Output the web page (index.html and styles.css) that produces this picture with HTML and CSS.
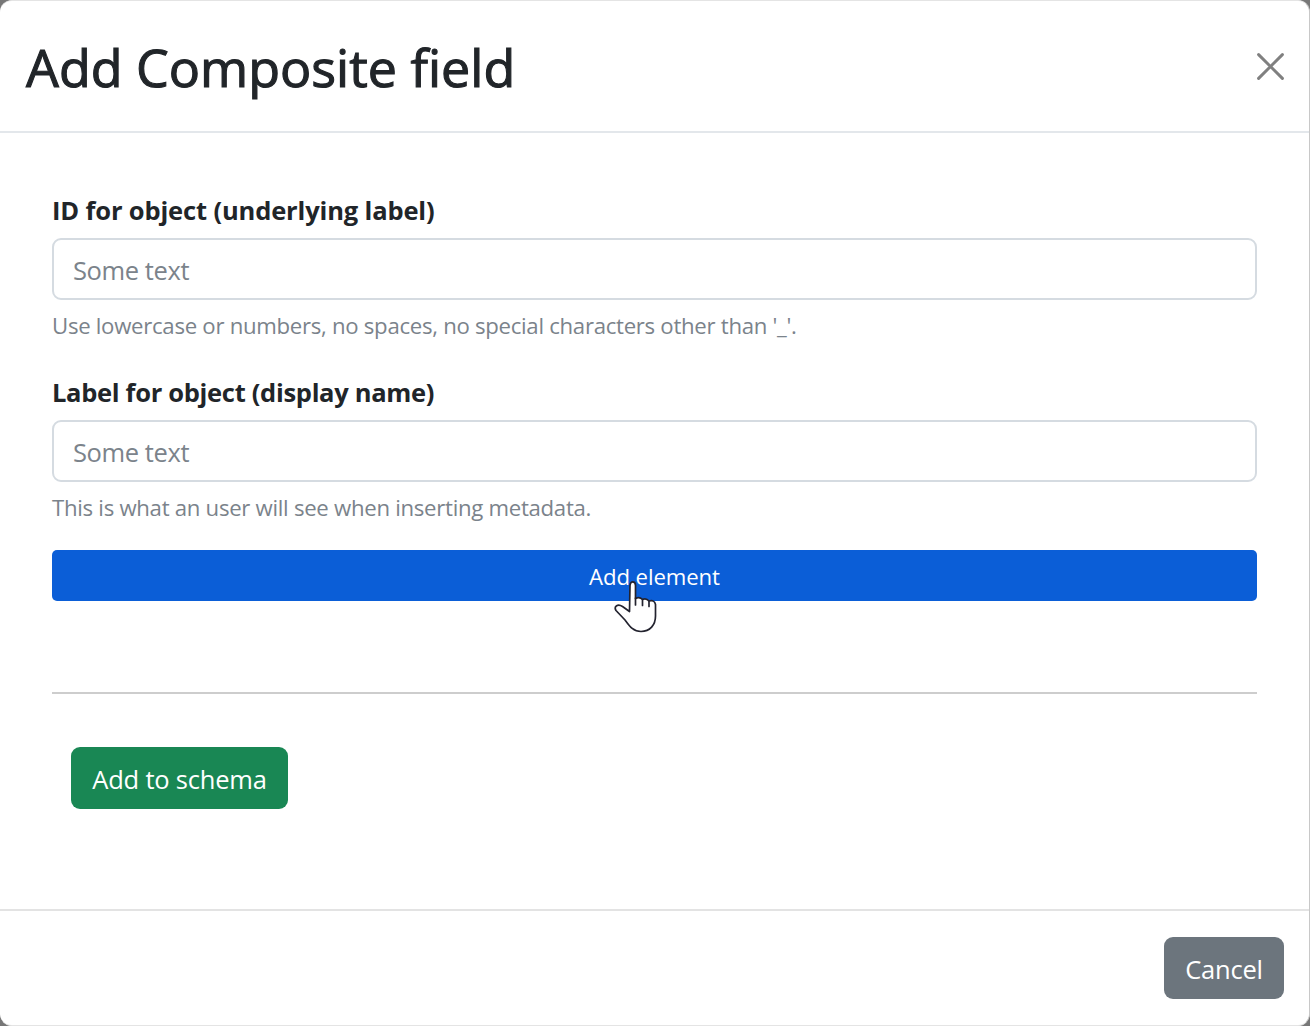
FILE: index.html
```html
<!DOCTYPE html>
<html lang="en">
<head>
<meta charset="utf-8">
<title>Add Composite field</title>
<link rel="stylesheet" href="styles.css">
</head>
<body>
<div class="modal" role="dialog" aria-labelledby="title">
  <header class="modal-header">
    <h1 class="title" id="title">Add Composite field</h1>
    <button class="close" aria-label="Close">
      <svg viewBox="0 0 27 27" width="27" height="27"><path d="M1.600 1.600 25.400 25.400M25.400 1.600 1.600 25.400" fill="none" stroke="#808080" stroke-width="3" stroke-linecap="round"/></svg>
    </button>
  </header>
  <main class="modal-body">
    <div class="field">
      <label class="label label-id" for="object-id">ID for object (underlying label)</label>
      <input class="input" id="object-id" type="text" placeholder="Some text">
      <div class="help">Use lowercase or numbers, no spaces, no special characters other than '_'.</div>
    </div>
    <div class="field">
      <label class="label label-name" for="object-label">Label for object (display name)</label>
      <input class="input" id="object-label" type="text" placeholder="Some text">
      <div class="help">This is what an user will see when inserting metadata.</div>
    </div>
    <button class="btn btn-element">Add element
      <svg class="pointer" viewBox="0 0 44 54" width="44" height="54"><path d="M16 5.500C16 .7 21.500.7 21.500 5.500V18.500Q25.500 16.500 28.500 19.500Q32 17.500 35 21Q40.500 19.500 41.500 24.500V36C41.500 45 36 51.500 27 51.500C19 51.500 15.500 46 11 40L2 30.500C-.5 26 4 23.500 8.500 26.500L15.500 31.500Z" fill="#fff" stroke="#23232f" stroke-width="1.700" stroke-linejoin="round"/><path d="M21.500 18V25M28.500 19.500V25.500M35 21V26.500" fill="none" stroke="#23232f" stroke-width="1.700" stroke-linecap="round"/></svg>
    </button>
    <hr class="divider">
    <button class="btn btn-schema">Add to schema</button>
  </main>
  <footer class="modal-footer">
    <button class="btn btn-cancel">Cancel</button>
  </footer>
</div>
</body>
</html>
```
FILE: styles.css
```css
* {
  box-sizing: border-box;
}

body {
  margin: 0;
  height: 1026px;
  overflow: hidden;
  background: #777;
  font-family: "Open Sans", "Noto Sans", sans-serif;
  font-size: 25.5px;
  color: #212529;
}

.modal {
  display: flex;
  flex-direction: column;
  height: 1026px;
  background: #fff;
  border: 1px solid #e4e4e4;
  border-width: 1px 1px 1px 0;
  border-right-color: #c8c8c8;
  border-radius: 12px;
}

.modal-header {
  display: flex;
  align-items: center;
  justify-content: space-between;
  height: 132px;
  padding: 0 25px 0 26px;
  border-bottom: 2px solid #e3e7eb;
}

.title {
  margin: 1px 0 0;
  font-size: 52px;
  font-weight: 500;
  line-height: 64px;
  letter-spacing: 0;
  white-space: nowrap;
  -webkit-text-stroke: 1.1px currentColor;
}

.close {
  display: flex;
  padding: 0;
  border: 0;
  background: none;
}

.modal-body {
  flex: 1;
  padding: 59px 52px 0;
}

.field {
  height: 182px;
}

.label {
  display: block;
  height: 46px;
  line-height: 36px;
  font-weight: 700;
  white-space: nowrap;
}

.label-id {
  letter-spacing: -0.14px;
}

.label-name {
  letter-spacing: -0.3px;
}

.input {
  display: block;
  width: 100%;
  height: 62px;
  padding: 1px 20px 0 19px;
  border: 2px solid #d5dbe1;
  border-radius: 9px;
  background: #fff;
  font: inherit;
  letter-spacing: -0.4px;
  color: #212529;
}

.input::placeholder {
  color: #7b838b;
  opacity: 1;
}

.help {
  margin-top: 8px;
  font-size: 22.2px;
  line-height: 35px;
  letter-spacing: -0.29px;
  color: #7b838b;
  white-space: nowrap;
}

.btn {
  display: block;
  padding: 0;
  border: 0;
  font: inherit;
  letter-spacing: -0.2px;
  color: #fff;
  white-space: nowrap;
}

.btn-element {
  position: relative;
  width: 100%;
  height: 51px;
  margin-top: -6px;
  padding-top: 1px;
  border-radius: 5px;
  background: #0b5ed7;
  font-size: 22.2px;
  letter-spacing: -0.1px;
}

.pointer {
  position: absolute;
  left: 562px;
  top: 30px;
}

.divider {
  height: 2px;
  margin: 91px 0 53px;
  border: 0;
  background: #cdcdcd;
}

.btn-schema {
  width: 217px;
  height: 62px;
  margin-left: 19px;
  padding-top: 1px;
  border-radius: 9px;
  background: #198754;
}

.modal-footer {
  display: flex;
  justify-content: flex-end;
  height: 116px;
  padding: 26px 25px 0 0;
  border-top: 2px solid #e3e3e3;
}

.btn-cancel {
  width: 120px;
  height: 62px;
  padding-top: 1px;
  border-radius: 9px;
  background: #6c757d;
}
```
